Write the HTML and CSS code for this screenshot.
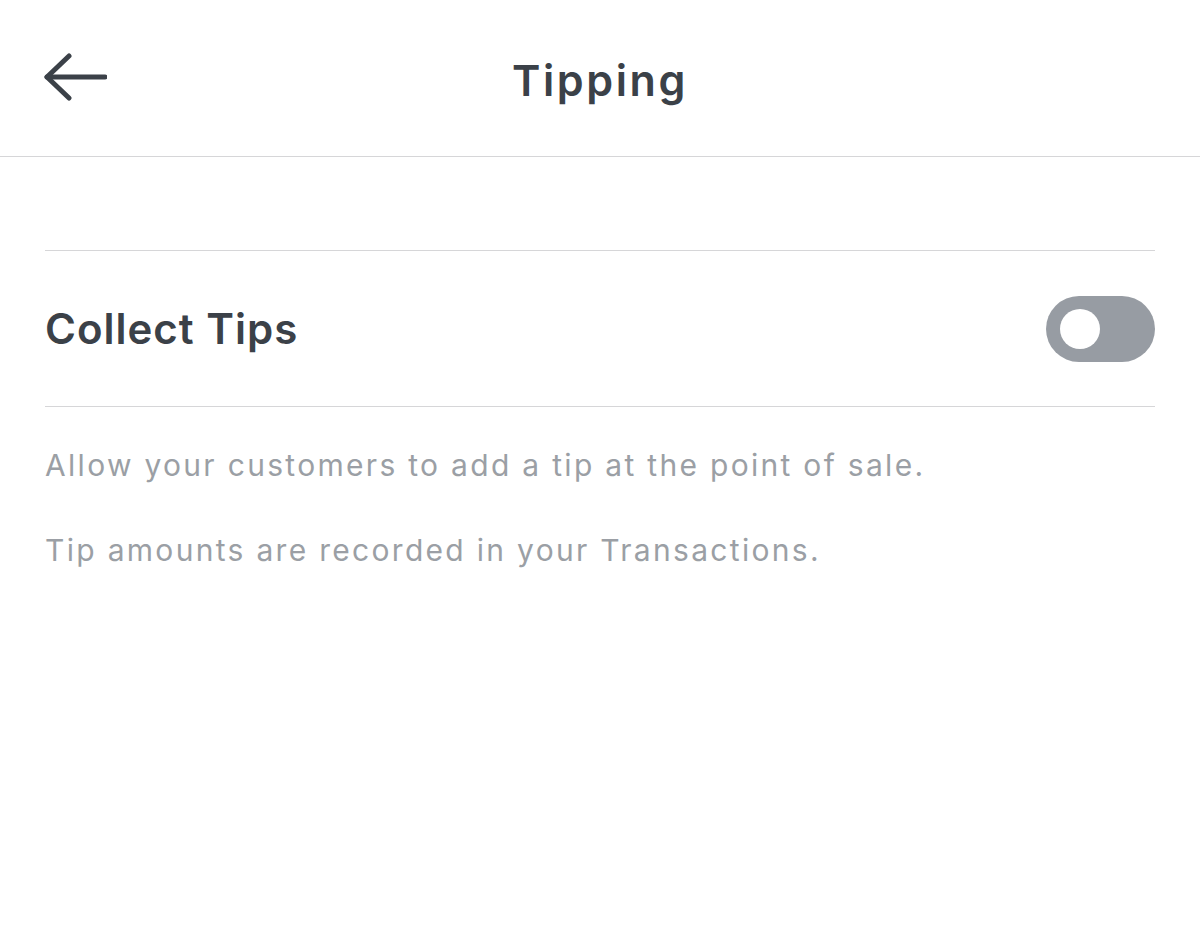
FILE: index.html
```html
<!DOCTYPE html>
<html lang="en">
<head>
    <meta charset="UTF-8">
    <meta name="viewport" content="width=device-width, initial-scale=1.0">
    <title>Tipping</title>
    <link rel="stylesheet" href="styles.css">
</head>
<body>
    <header class="top-bar">
        <button class="back-btn" aria-label="Back">
            <svg width="64" height="48" viewBox="0 0 64 48" fill="none" stroke="currentColor" stroke-width="5" stroke-linecap="round" stroke-linejoin="round">
                <path d="M62 24H4"/>
                <path d="M26 3L4 24L26 45"/>
            </svg>
        </button>
        <h1 class="title">Tipping</h1>
    </header>

    <main class="settings">
        <div class="setting-row">
            <span class="setting-label">Collect Tips</span>
            <label class="toggle">
                <input type="checkbox">
                <span class="toggle-track"></span>
            </label>
        </div>

        <div class="setting-help">
            <p>Allow your customers to add a tip at the point of sale.</p>
            <p>Tip amounts are recorded in your Transactions.</p>
        </div>
    </main>
</body>
</html>
```

FILE: styles.css
```css
* {
    margin: 0;
    padding: 0;
    box-sizing: border-box;
}

body {
    font-family: 'Inter', 'Roboto', sans-serif;
    background: #fff;
    color: #3b4148;
}

.top-bar {
    height: 157px;
    border-bottom: 1px solid #d6d6d8;
    display: flex;
    align-items: center;
    justify-content: center;
    position: relative;
}

.back-btn {
    position: absolute;
    left: 43px;
    top: 53px;
    background: none;
    border: none;
    color: #3b4148;
    cursor: pointer;
    display: flex;
}

.title {
    font-size: 43px;
    font-weight: 600;
    letter-spacing: 2.6px;
    margin-top: 3px;
}

.settings {
    padding: 93px 45px 0;
}

.setting-row {
    height: 157px;
    border-top: 1px solid #d6d6d8;
    border-bottom: 1px solid #d6d6d8;
    display: flex;
    align-items: center;
    justify-content: space-between;
}

.setting-label {
    font-size: 42px;
    font-weight: 600;
    letter-spacing: 1px;
}

.toggle {
    display: flex;
    cursor: pointer;
}

.toggle input {
    display: none;
}

.toggle-track {
    width: 109px;
    height: 66px;
    border-radius: 33px;
    background: #979ca3;
    position: relative;
}

.toggle-track::after {
    content: "";
    position: absolute;
    left: 14px;
    top: 13px;
    width: 40px;
    height: 40px;
    border-radius: 50%;
    background: #fff;
}

.setting-help {
    padding-top: 40px;
    color: #9b9fa5;
    font-size: 30px;
    letter-spacing: 2.3px;
    display: flex;
    flex-direction: column;
    gap: 48px;
}

.setting-help p {
    line-height: 37px;
}
```
